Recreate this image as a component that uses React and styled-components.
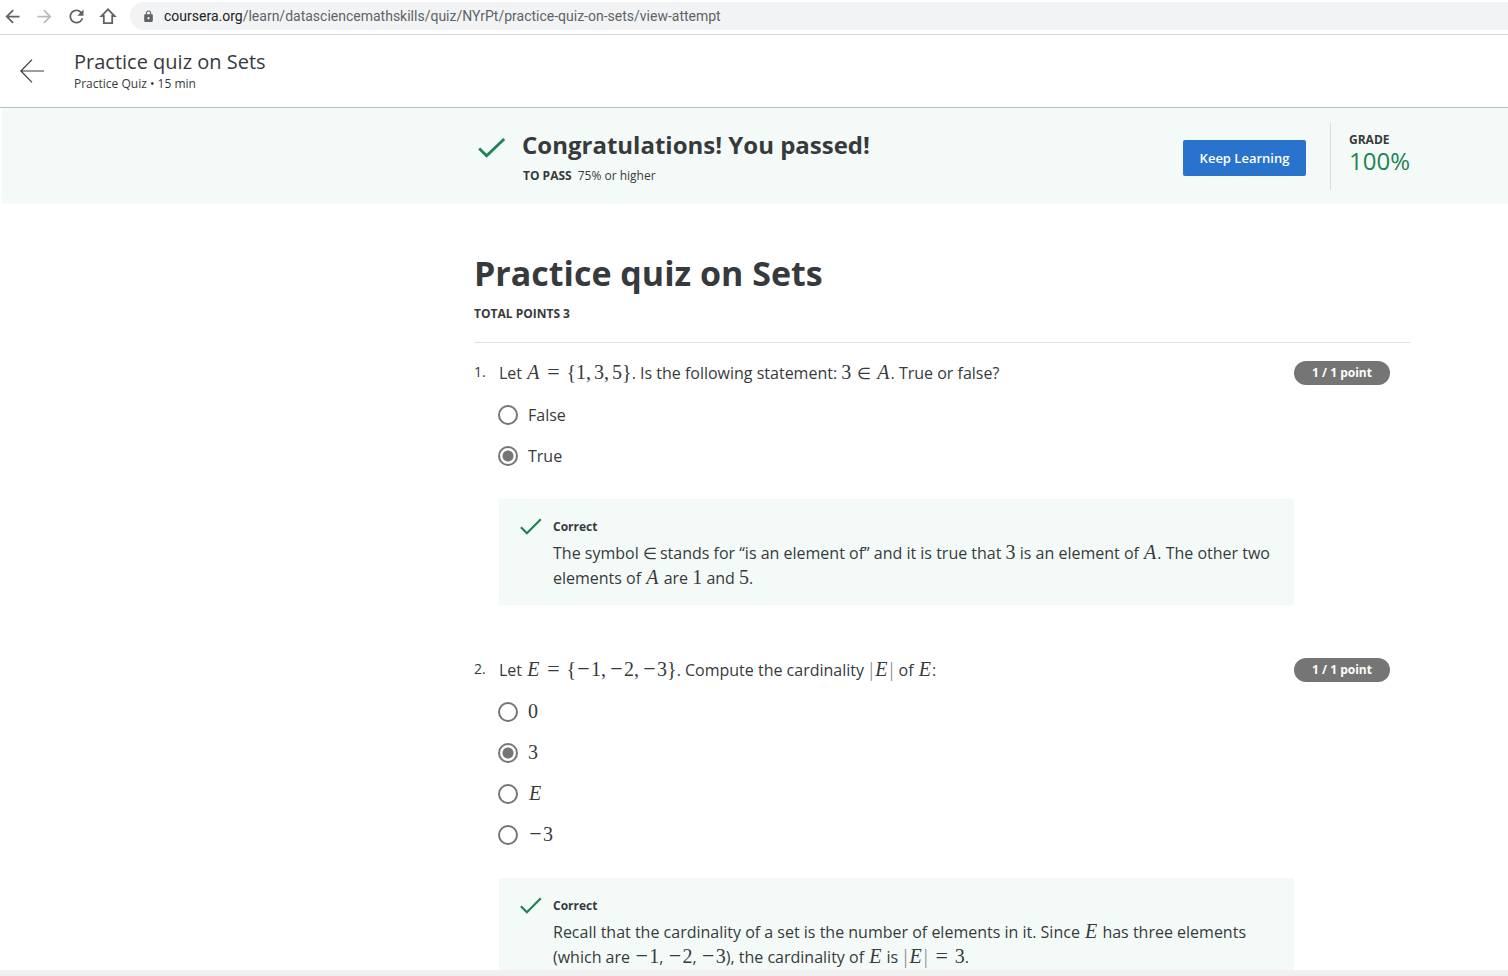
import React from "react";
import styled, { createGlobalStyle } from "styled-components";
import { MdArrowBack, MdArrowForward, MdRefresh, MdLock } from "react-icons/md";

const GlobalStyle = createGlobalStyle`
  *, *::before, *::after { box-sizing: border-box; }
  body {
    margin: 0;
    background: #fff;
    color: #373a3c;
    font-family: "Open Sans", "Noto Sans", sans-serif;
    font-size: 16px;
  }
  svg { flex: none; }
`;

const Page = styled.div`
  height: 100vh;
  display: flex;
  flex-direction: column;
`;

const BrowserBar = styled.nav`
  display: flex;
  align-items: center;
  flex: none;
  height: 35px;
  padding: 2px 0 4px;
  border-bottom: 1px solid #d6d6d6;
`;

const NavButtons = styled.div`
  display: flex;
  gap: 8px;
  margin-right: 10px;
`;

const NavButton = styled.button`
  display: flex;
  align-items: center;
  justify-content: center;
  width: 24px;
  height: 28px;
  padding: 0;
  border: 0;
  background: none;
  color: ${(p) => (p.disabled ? "#bababa" : "#5f6368")};
`;

const AddressBar = styled.div`
  display: flex;
  align-items: center;
  flex: 1;
  gap: 9px;
  height: 28px;
  padding-left: 12px;
  border-radius: 14px 0 0 14px;
  background: #f1f3f4;
  color: #5f6368;
`;

const Url = styled.span`
  font-family: Roboto, sans-serif;
  font-size: 14px;
  line-height: 20px;
  white-space: nowrap;
`;

const Domain = styled.span`
  color: #202124;
`;

const CourseHeader = styled.header`
  display: flex;
  align-items: center;
  flex: none;
  gap: 30px;
  height: 73px;
  padding-left: 20px;
  border-bottom: 1px solid #bdbdbd;
`;

const BackLink = styled.a`
  display: flex;
  color: #373a3c;
`;

const HeaderText = styled.div`
  padding-top: 2px;
`;

const HeaderTitle = styled.div`
  font-size: 20px;
  line-height: 24px;
`;

const HeaderMeta = styled.div`
  font-size: 12px;
  line-height: 20px;
`;

const Scroller = styled.div`
  flex: 1;
  min-height: 0;
  overflow-y: auto;
  scrollbar-width: none;
`;

const Banner = styled.section`
  display: flex;
  align-items: flex-start;
  height: 96px;
  margin-left: 2px;
  padding: 15px 98px 0 476px;
  background: #f4faf8;
`;

const BannerCheck = styled.div`
  display: flex;
  padding-top: 15px;
  margin-right: 16px;
`;

const BannerText = styled.div`
  flex: 1;
  padding-top: 4px;
`;

const BannerTitle = styled.h2`
  margin: 0;
  font-size: 24px;
  line-height: 36px;
  font-weight: 700;
`;

const PassLine = styled.p`
  display: flex;
  gap: 6px;
  margin: 3px 0 0 1px;
  font-size: 12px;
  line-height: 20px;
`;

const KeepLearning = styled.button`
  height: 36px;
  width: 123px;
  margin: 17px 24px 0 0;
  padding: 0;
  border: 0;
  border-radius: 2px;
  background: #2a73cc;
  color: #fff;
  font: 600 13px/20px "Open Sans", sans-serif;
`;

const Grade = styled.div`
  width: 80px;
  height: 67px;
  padding: 8px 0 0 18px;
  border-left: 1px solid #dcdfdf;
`;

const GradeLabel = styled.div`
  font-size: 12px;
  line-height: 18px;
  font-weight: 700;
`;

const GradeValue = styled.div`
  color: #1f8354;
  font-size: 24px;
  line-height: 24px;
`;

const Quiz = styled.main`
  padding: 45px 98px 40px 474px;
`;

const QuizTitle = styled.h1`
  margin: 0;
  font-size: 34px;
  line-height: 48px;
  font-weight: 700;
`;

const TotalPoints = styled.p`
  margin: 7px 0 0;
  padding-bottom: 18px;
  border-bottom: 1px solid #e1e1e1;
  font-size: 12px;
  line-height: 20px;
  font-weight: 700;
`;

const Question = styled.section`
  display: flex;
  align-items: flex-start;
  padding: 18px 20px 35px 0;
`;

const Number = styled.div`
  width: 25px;
  flex: none;
  font-size: 14px;
  line-height: 22px;
`;

const Body = styled.div`
  flex: 1;
  min-width: 0;
`;

const Prompt = styled.p`
  margin: 0;
  line-height: 25px;
`;

const Options = styled.div`
  padding: 8px 0 23px;
`;

const Option = styled.label`
  display: flex;
  align-items: center;
  gap: 10px;
  height: 41px;
  margin-left: -1px;
  line-height: 25px;
`;

const OptionText = styled.span`
  padding-top: 2px;
`;

const Radio = styled.input`
  appearance: none;
  width: 20px;
  height: 20px;
  margin: 0;
  border: 2px solid #757575;
  border-radius: 50%;
  background: #fff;
  &:checked {
    background: radial-gradient(circle, #757575 5px, #fff 6px);
  }
`;

const Points = styled.div`
  width: 96px;
  flex: none;
  border-radius: 12px;
  background: #757575;
  color: #fff;
  text-align: center;
  font-size: 12px;
  line-height: 24px;
  font-weight: 700;
`;

const Feedback = styled.div`
  display: flex;
  gap: 11px;
  padding: 18px 16px 14px 21px;
  background: #f4faf8;
`;

const FeedbackTitle = styled.div`
  font-size: 12px;
  line-height: 20px;
  font-weight: 700;
`;

const FeedbackText = styled.p`
  margin: 4px 0 0;
  line-height: 25px;
`;

const Math = styled.span`
  font-family: "Liberation Serif", serif;
  font-size: 20px;
  line-height: 20px;
  white-space: nowrap;
`;

const Variable = styled.i`
  margin: 0 1px;
`;

const Operator = styled.span`
  display: inline-block;
  width: ${(p) => p.$width}px;
  font-size: ${(p) => p.$size}px;
  line-height: 16px;
  text-align: center;
`;

const Comma = styled.span`
  margin-right: 3px;
`;

const Bar = styled.span`
  margin: 0 1px;
  color: #8b8d8e;
`;

const StatusStrip = styled.footer`
  flex: none;
  height: 6px;
  background: #f0f0f0;
`;

const Eq = () => <Operator $width={26} $size={22}>=</Operator>;
const In = ({ width }) => <Operator $width={width} $size={16}>∈</Operator>;
const Minus = () => <Operator $width={15} $size={22}>−</Operator>;
const Sep = () => <Comma>,</Comma>;
const M = ({ children }) => <Math>{children}</Math>;
const V = ({ children }) => <Variable>{children}</Variable>;
const Card = () => (
  <>
    <Bar>|</Bar>
    <V>E</V>
    <Bar>|</Bar>
  </>
);

const HomeIcon = () => (
  <svg width="18" height="18" viewBox="0 0 18 18" fill="none" stroke="currentColor" strokeWidth="1.8" aria-hidden="true">
    <path d="M9 2.3 2.4 9H4.8V16.1h8.4V9h2.4z" />
  </svg>
);

const BackArrow = () => (
  <svg width="24" height="24" viewBox="0 0 24 24" fill="none" stroke="currentColor" strokeWidth="1.2" aria-hidden="true">
    <path d="M24 12H1M12 .7.9 12 12 23.3" />
  </svg>
);

const LargeCheck = () => (
  <svg width="28" height="20" viewBox="0 0 28 20" fill="none" stroke="#1f8354" strokeWidth="2.8" aria-hidden="true">
    <path d="M1.2 10.6 8.6 17.8 26.2 1" />
  </svg>
);

const SmallCheck = () => (
  <svg width="22" height="18" viewBox="0 0 22 18" fill="none" stroke="#1f8354" strokeWidth="2.2" aria-hidden="true">
    <path d="M.9 10.3 6.9 16.2 20.8 2.3" />
  </svg>
);

const questions = [
  {
    prompt: (
      <>
        Let <M><V>A</V><Eq />{"{"}1<Sep />3<Sep />5{"}"}</M>. Is the following statement:{" "}
        <M>3<In width={25} /><V>A</V></M>. True or false?
      </>
    ),
    options: ["False", "True"],
    answer: 1,
    feedback: (
      <>
        The symbol <M><In width={13} /></M> stands for “is an element of” and it is true that <M>3</M> is an
        element of <M><V>A</V></M>. The other two elements of <M><V>A</V></M> are <M>1</M> and <M>5</M>.
      </>
    ),
  },
  {
    prompt: (
      <>
        Let <M><V>E</V><Eq />{"{"}<Minus />1<Sep /><Minus />2<Sep /><Minus />3{"}"}</M>. Compute the cardinality{" "}
        <M><Card /></M> of <M><V>E</V></M>:
      </>
    ),
    options: [<M>0</M>, <M>3</M>, <M><V>E</V></M>, <M><Minus />3</M>],
    answer: 1,
    feedback: (
      <>
        Recall that the cardinality of a set is the number of elements in it. Since <M><V>E</V></M> has three elements
        (which are <M><Minus />1</M>, <M><Minus />2</M>, <M><Minus />3</M>), the cardinality of <M><V>E</V></M> is{" "}
        <M><Card /><Eq />3</M>.
      </>
    ),
  },
];

export default function App() {
  return (
    <Page>
      <GlobalStyle />
      <BrowserBar>
        <NavButtons>
          <NavButton aria-label="Back"><MdArrowBack size={21} /></NavButton>
          <NavButton aria-label="Forward" disabled><MdArrowForward size={21} /></NavButton>
          <NavButton aria-label="Reload"><MdRefresh size={21} /></NavButton>
          <NavButton aria-label="Home"><HomeIcon /></NavButton>
        </NavButtons>
        <AddressBar>
          <MdLock size={13} />
          <Url><Domain>coursera.org</Domain>/learn/datasciencemathskills/quiz/NYrPt/practice-quiz-on-sets/view-attempt</Url>
        </AddressBar>
      </BrowserBar>
      <CourseHeader>
        <BackLink href="#" aria-label="Back to course"><BackArrow /></BackLink>
        <HeaderText>
          <HeaderTitle>Practice quiz on Sets</HeaderTitle>
          <HeaderMeta>Practice Quiz • 15 min</HeaderMeta>
        </HeaderText>
      </CourseHeader>
      <Scroller>
        <Banner>
          <BannerCheck><LargeCheck /></BannerCheck>
          <BannerText>
            <BannerTitle>Congratulations! You passed!</BannerTitle>
            <PassLine><b>TO PASS</b><span>75% or higher</span></PassLine>
          </BannerText>
          <KeepLearning>Keep Learning</KeepLearning>
          <Grade>
            <GradeLabel>GRADE</GradeLabel>
            <GradeValue>100%</GradeValue>
          </Grade>
        </Banner>
        <Quiz>
          <QuizTitle>Practice quiz on Sets</QuizTitle>
          <TotalPoints>TOTAL POINTS 3</TotalPoints>
          {questions.map((q, qi) => (
            <Question key={qi}>
              <Number>{qi + 1}.</Number>
              <Body>
                <Prompt>{q.prompt}</Prompt>
                <Options>
                  {q.options.map((o, oi) => (
                    <Option key={oi}>
                      <Radio type="radio" name={`question-${qi}`} defaultChecked={oi === q.answer} />
                      <OptionText>{o}</OptionText>
                    </Option>
                  ))}
                </Options>
                <Feedback>
                  <SmallCheck />
                  <div>
                    <FeedbackTitle>Correct</FeedbackTitle>
                    <FeedbackText>{q.feedback}</FeedbackText>
                  </div>
                </Feedback>
              </Body>
              <Points>1 / 1 point</Points>
            </Question>
          ))}
        </Quiz>
      </Scroller>
      <StatusStrip />
    </Page>
  );
}
